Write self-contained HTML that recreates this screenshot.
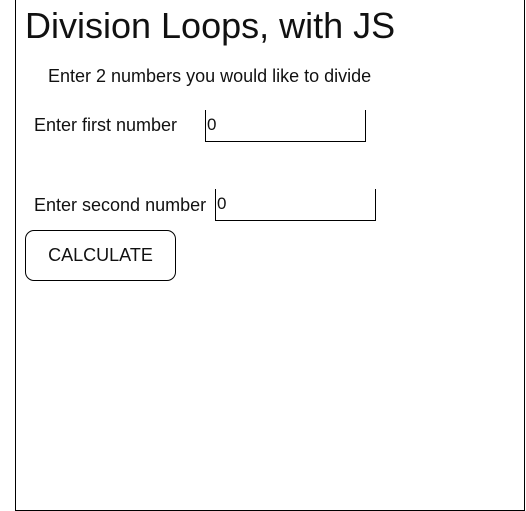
<!DOCTYPE html>
<html><head><style>
body{margin:0;background:#fff;font-family:"Liberation Sans",Arial,sans-serif;color:#111;width:526px;height:511px;overflow:hidden;position:relative}
.box{position:absolute;left:15px;top:-5px;width:508px;height:514px;border:1px solid #000}
.a{position:absolute;white-space:nowrap}
.inp{position:absolute;border-left:1px solid #000;border-right:1px solid #000;border-bottom:1px solid #000;font-size:17px;line-height:30px;padding-left:1px;box-sizing:border-box}
.btn{position:absolute;left:25px;top:230px;width:151px;height:51px;border:1px solid #000;border-radius:9px;box-sizing:border-box;text-align:center;line-height:48px;font-size:18px}
</style></head><body>
<div class="box"></div>
<div class="a" style="left:25px;top:4px;font-size:36px;line-height:44px">Division Loops, with JS</div>
<div class="a" style="left:48px;top:65px;font-size:18px;line-height:22px">Enter 2 numbers you would like to divide</div>
<div class="a" style="left:34px;top:114px;font-size:18px;line-height:22px">Enter first number</div>
<div class="inp" style="left:205px;top:110px;width:161px;height:32px">0</div>
<div class="a" style="left:34px;top:194px;font-size:18px;line-height:22px">Enter second number</div>
<div class="inp" style="left:215px;top:189px;width:161px;height:32px">0</div>
<div class="btn">CALCULATE</div>
</body></html>
